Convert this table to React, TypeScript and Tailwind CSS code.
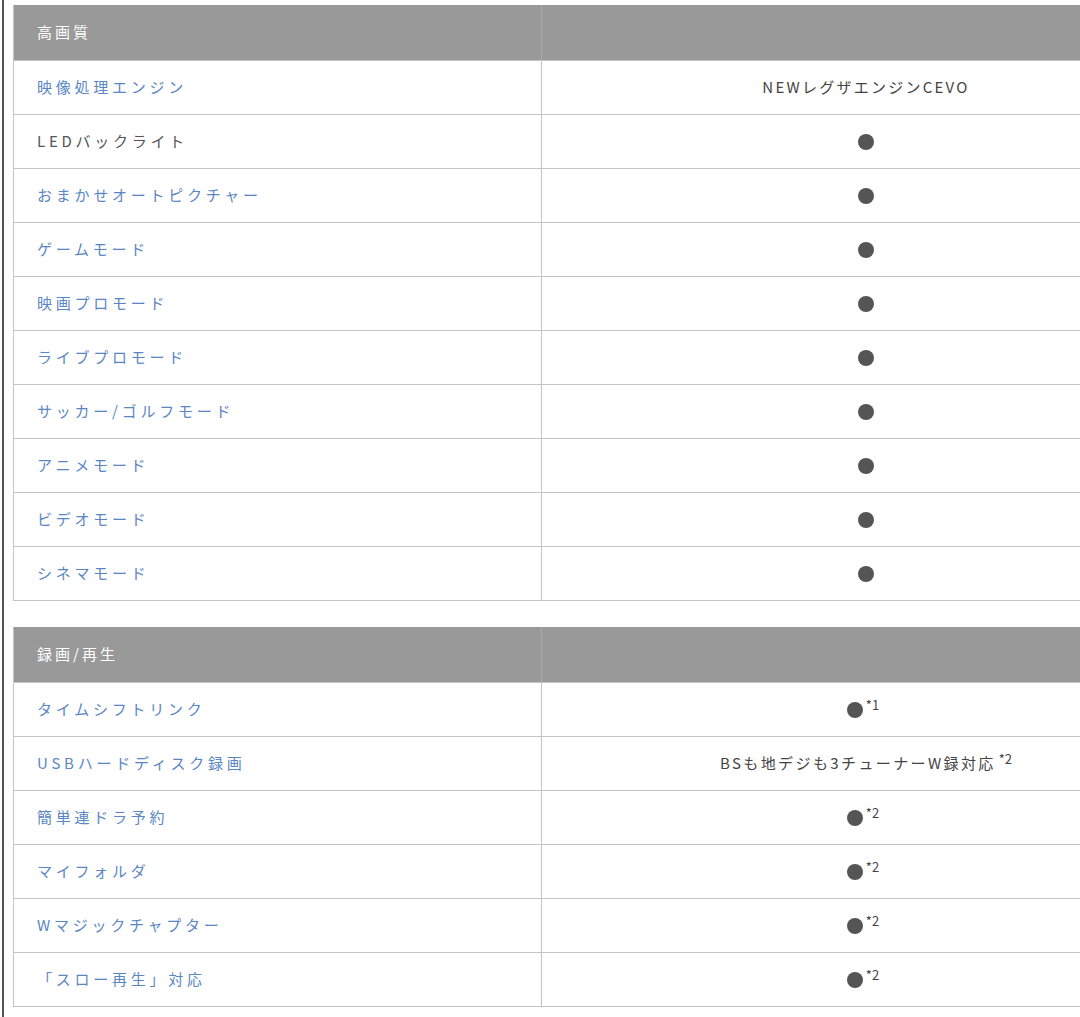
import React from "react";

type Row = { label: string; value: React.ReactNode; gray?: boolean };

const Dot = () => <span className="inline-block w-[16px] h-[16px] rounded-full bg-[#555] align-middle" />;

const Note = ({ n }: { n: string }) => (
  <sup className="text-[13px] text-[#444] ml-[3px] relative top-[-5px] tracking-normal">*{n}</sup>
);

const DotNote = ({ n }: { n: string }) => (
  <span className="inline-flex items-center ml-[-6px]">
    <Dot />
    <Note n={n} />
  </span>
);

const t1: Row[] = [
  { label: "映像処理エンジン", value: <span className="tracking-[0.15em]">NEWレグザエンジンCEVO</span> },
  { label: "LEDバックライト", value: <Dot />, gray: true },
  { label: "おまかせオートピクチャー", value: <Dot /> },
  { label: "ゲームモード", value: <Dot /> },
  { label: "映画プロモード", value: <Dot /> },
  { label: "ライブプロモード", value: <Dot /> },
  { label: "サッカー/ゴルフモード", value: <Dot /> },
  { label: "アニメモード", value: <Dot /> },
  { label: "ビデオモード", value: <Dot /> },
  { label: "シネマモード", value: <Dot /> },
];

const t2: Row[] = [
  { label: "タイムシフトリンク", value: <DotNote n="1" /> },
  {
    label: "USBハードディスク録画",
    value: (
      <span className="tracking-[0.16em]">
        BSも地デジも3チューナーW録対応
        <Note n="2" />
      </span>
    ),
  },
  { label: "簡単連ドラ予約", value: <DotNote n="2" /> },
  { label: "マイフォルダ", value: <DotNote n="2" /> },
  { label: "Wマジックチャプター", value: <DotNote n="2" /> },
  { label: "「スロー再生」対応", value: <DotNote n="2" /> },
];

function Table({ title, rows }: { title: string; rows: Row[] }) {
  return (
    <div className="w-[1177px] border-l border-[#c4c4c4]">
      <div className="flex h-[56px] bg-[#999999] border-b border-[#c4c4c4]">
        <div className="w-[527px] flex items-center pl-[23px] text-white text-[15px] tracking-[0.2em]">
          {title}
        </div>
        <div className="flex-1 border-l border-[#aaaaaa]" />
      </div>
      {rows.map((r, i) => (
        <div key={i} className="flex h-[54px] border-b border-[#c4c4c4]">
          <div
            className={`w-[527px] flex items-center pl-[23px] text-[15px] tracking-[0.25em] ${
              r.gray ? "text-[#555]" : "text-[#5a86c4]"
            }`}
          >
            {r.label}
          </div>
          <div className="flex-1 border-l border-[#c4c4c4] flex items-center justify-center text-[15px] text-[#444]">
            {r.value}
          </div>
        </div>
      ))}
    </div>
  );
}

export default function App() {
  return (
    <div
      className="w-[1080px] h-[1017px] overflow-hidden bg-white pl-[2px]"
      style={{ fontFamily: '"Noto Sans CJK JP", "Noto Sans", sans-serif' }}
    >
      <div className="h-full border-l-2 border-[#555] pl-[9px] pt-[5px] flex flex-col gap-[26px]">
        <Table title="高画質" rows={t1} />
        <Table title="録画/再生" rows={t2} />
      </div>
    </div>
  );
}
